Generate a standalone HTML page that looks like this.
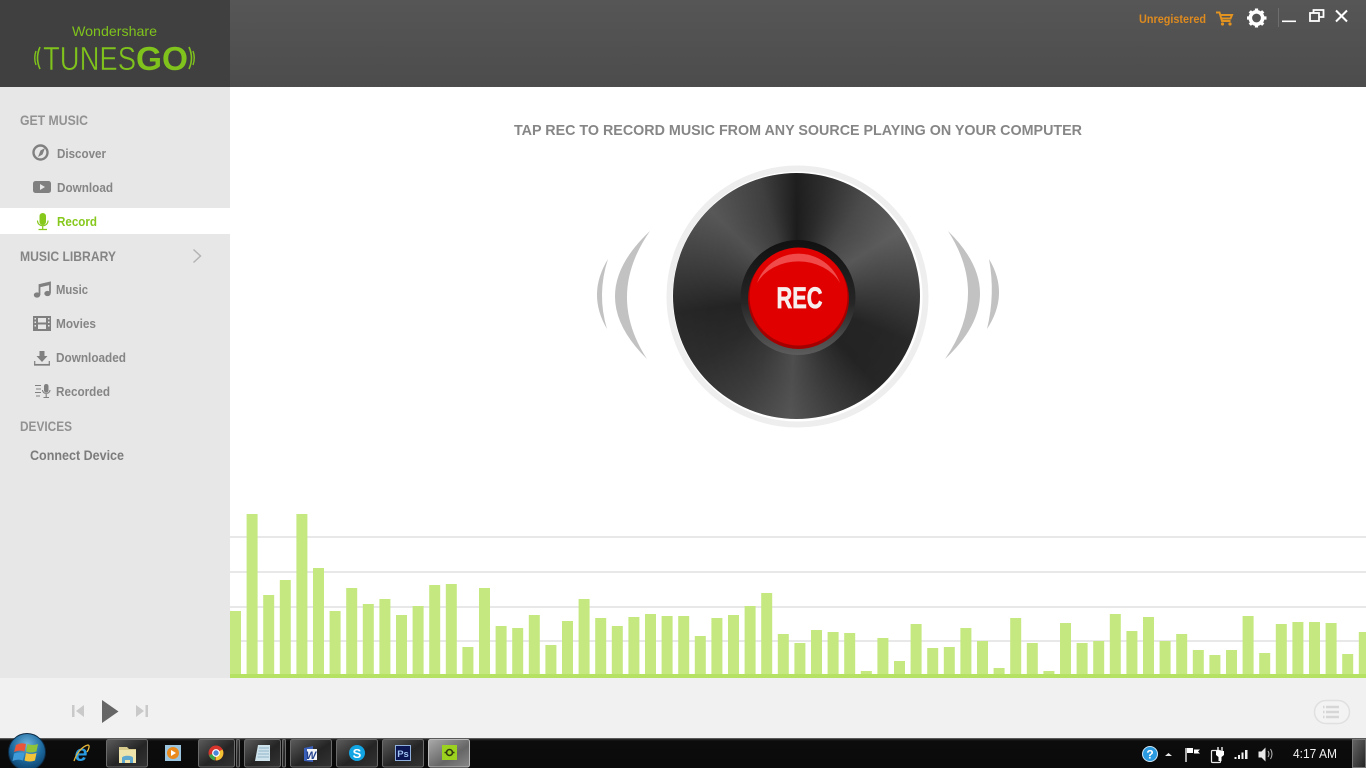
<!DOCTYPE html>
<html><head><meta charset="utf-8"><title>TunesGo</title>
<style>
html,body{margin:0;padding:0;width:1366px;height:768px;overflow:hidden;background:#fff}
svg{position:absolute;left:0;top:0;display:block}
#disc{position:absolute;left:673px;top:173px;width:247px;height:246px;border-radius:50%;
background:radial-gradient(circle,rgba(0,0,0,.22) 0%,rgba(0,0,0,.16) 50%,rgba(0,0,0,0) 100%),conic-gradient(#222 0deg,#333 14deg,#555 35deg,#6a6a6a 58deg,#4a4a4a 85deg,#2c2c2c 112deg,#2a2a2a 138deg,#444 162deg,#5e5e5e 183deg,#454545 208deg,#333 235deg,#2b2b2b 262deg,#444 285deg,#626262 315deg,#484848 342deg,#222 360deg)}
text{font-family:"Liberation Sans",sans-serif}
</style></head><body>
<svg width="1366" height="768" viewBox="0 0 1366 768" xmlns="http://www.w3.org/2000/svg">
<defs>
<linearGradient id="hd" x1="0" y1="0" x2="0" y2="1"><stop offset="0" stop-color="#565656"/><stop offset="1" stop-color="#4c4c4c"/></linearGradient>
<linearGradient id="tb" x1="0" y1="0" x2="0" y2="1"><stop offset="0" stop-color="#3c3c3c"/><stop offset=".1" stop-color="#0c0c0c"/><stop offset="1" stop-color="#0a0a0a"/></linearGradient>
<linearGradient id="btn" x1="0" y1="0" x2="1" y2="1"><stop offset="0" stop-color="#5c5c5c"/><stop offset=".55" stop-color="#242424"/><stop offset="1" stop-color="#333"/></linearGradient>
<linearGradient id="btnA" x1="0" y1="0" x2="1" y2="1"><stop offset="0" stop-color="#aaa"/><stop offset=".6" stop-color="#666"/><stop offset="1" stop-color="#888"/></linearGradient>
<radialGradient id="orb" cx=".5" cy=".3" r=".75"><stop offset="0" stop-color="#6fb3dd"/><stop offset=".55" stop-color="#1c6a9f"/><stop offset="1" stop-color="#0a3a63"/></radialGradient>
<linearGradient id="glass" x1="0" y1="0" x2="1" y2="1"><stop offset="0" stop-color="#666"/><stop offset="1" stop-color="#222"/></linearGradient>
</defs>

<!-- header -->
<rect x="230" y="0" width="1136" height="87" fill="url(#hd)"/>
<rect x="0" y="0" width="230" height="87" fill="#404040"/>
<text x="72" y="36" font-size="14" fill="#7fc31c" textLength="85" lengthAdjust="spacingAndGlyphs">Wondershare</text>
<text x="43" y="70" font-size="33" fill="#7fc31c" stroke="#404040" stroke-width=".5" paint-order="fill stroke" textLength="93" lengthAdjust="spacingAndGlyphs">TUNES</text>
<text x="136" y="70" font-size="33" font-weight="bold" fill="#7fc31c" textLength="52" lengthAdjust="spacingAndGlyphs">GO</text>
<g fill="none" stroke="#7fc31c">
<path d="M40 47Q35 58 40 69" stroke-width="1.6"/><path d="M36 51Q33.500 58 36 65" stroke-width="1.400"/>
<path d="M189 47Q194 58 189 69" stroke-width="1.600"/><path d="M193 51Q195.500 58 193 65" stroke-width="1.400"/>
</g>

<!-- top right -->
<text x="1139" y="23" font-size="12" font-weight="bold" fill="#dd8a1f" textLength="67" lengthAdjust="spacingAndGlyphs">Unregistered</text>
<g fill="none" stroke="#e29320" stroke-width="2"><path d="M1216 12.500h3.500l2.500 8.500h8.500"/><path d="M1220 15h12l-1.500 3.500h-9"/></g>
<circle cx="1222.500" cy="24" r="1.600" fill="#e29320"/><circle cx="1230" cy="24" r="1.600" fill="#e29320"/>
<circle cx="1256.500" cy="18" r="6.200" fill="none" stroke="#fff" stroke-width="3.600"/>
<g stroke="#fff" stroke-width="3.200"><path d="M1256.500 8.500v3.500M1256.500 24v3.500M1247 18h3.500M1263 18h3.500M1249.800 11.300l2.500 2.500M1260.700 22.200l2.500 2.500M1249.800 24.700l2.500-2.500M1260.700 13.800l2.500-2.500"/></g>
<rect x="1278" y="8" width="1" height="19" fill="#6e6e6e"/>
<rect x="1282" y="20.500" width="14" height="1.600" fill="#fff"/>
<g fill="none" stroke="#fff" stroke-width="1.800"><rect x="1310" y="13" width="9" height="8"/><path d="M1313.500 13v-3h10v7h-4"/></g>
<path d="M1336 10.500l11 11M1347 10.500l-11 11" stroke="#fff" stroke-width="2" fill="none"/>

<!-- sidebar -->
<rect x="0" y="87" width="230" height="591" fill="#e7e7e7"/>
<rect x="0" y="208" width="230" height="26" fill="#fff"/>
<g font-weight="bold" font-size="14" fill="#929292">
<text x="20" y="125" textLength="68" lengthAdjust="spacingAndGlyphs">GET MUSIC</text>
<text x="20" y="261" textLength="96" lengthAdjust="spacingAndGlyphs" fill="#858585">MUSIC LIBRARY</text>
<text x="20" y="431" textLength="52" lengthAdjust="spacingAndGlyphs">DEVICES</text>
</g>
<g font-weight="bold" font-size="13" fill="#858585">
<text x="57" y="158" textLength="49" lengthAdjust="spacingAndGlyphs">Discover</text>
<text x="57" y="192" textLength="56" lengthAdjust="spacingAndGlyphs">Download</text>
<text x="57" y="226" textLength="40" lengthAdjust="spacingAndGlyphs" fill="#86c81c">Record</text>
<text x="56" y="294" textLength="32" lengthAdjust="spacingAndGlyphs">Music</text>
<text x="56" y="328" textLength="40" lengthAdjust="spacingAndGlyphs">Movies</text>
<text x="56" y="362" textLength="70" lengthAdjust="spacingAndGlyphs">Downloaded</text>
<text x="56" y="396" textLength="54" lengthAdjust="spacingAndGlyphs">Recorded</text>
<text x="30" y="460" textLength="94" lengthAdjust="spacingAndGlyphs" font-size="14" fill="#7c7c7c">Connect Device</text>
</g>
<!-- sidebar icons -->
<circle cx="40.500" cy="152.500" r="7" fill="none" stroke="#808080" stroke-width="2.400"/>
<path d="M45 148l-2.500 6.500-4.500 2.500 2.500-6.500z" fill="#808080"/>
<rect x="33" y="181" width="18" height="12" rx="2.500" fill="#808080"/>
<path d="M40 184v6l5-3z" fill="#e7e7e7"/>
<rect x="39.500" y="213" width="6.500" height="12" rx="3.200" fill="#86c81c"/>
<path d="M37.500 220.500c0 7 10.500 7 10.500 0M42.700 226v3.500M38.500 229.500h8.500" fill="none" stroke="#86c81c" stroke-width="1.200"/>
<path d="M39.500 295V285l10.500-2.500V293" fill="none" stroke="#808080" stroke-width="1.800"/><path d="M39 284.500l11-2.500v3l-11 2.500z" fill="#808080"/>
<ellipse cx="37" cy="295" rx="3.200" ry="2.600" fill="#808080"/><ellipse cx="47.500" cy="293.500" rx="3.200" ry="2.600" fill="#808080"/>
<rect x="33" y="316" width="18" height="15" fill="#808080"/>
<path d="M38 318h8v4.500h-8zM38 324.500h8v4.500h-8z" fill="#e7e7e7"/>
<path d="M34.500 318h1.500v1.500h-1.500zM34.500 321.500h1.500v1.500h-1.500zM34.500 325h1.500v1.500h-1.500zM48 318h1.500v1.500h-1.500zM48 321.500h1.500v1.500h-1.500zM48 325h1.500v1.500h-1.500z" fill="#e7e7e7"/>
<path d="M39.500 351h5v5h3l-5.500 6-5.500-6h3z" fill="#808080"/>
<path d="M34 364.800h16" fill="none" stroke="#808080" stroke-width="1.700"/><path d="M34.700 361v4M49.300 361v4" stroke="#808080" stroke-width="1.200"/>
<path d="M35 385.500h6M36 389h5M35 392.500h6M36 396h4" stroke="#808080" stroke-width="1.100"/>
<rect x="44" y="384" width="4.500" height="8.500" rx="2.200" fill="#808080"/>
<path d="M42.500 390c0 4.500 7.500 4.500 7.500 0M46.200 394v3M43.500 397.500h5.500" fill="none" stroke="#808080" stroke-width="1.100"/>
<path d="M193.500 249.500l7 6.500-7 6.500" fill="none" stroke="#b4b4b4" stroke-width="1.500"/>

<!-- title -->
<text x="514" y="135" font-size="15" font-weight="bold" fill="#868686" textLength="568" lengthAdjust="spacingAndGlyphs">TAP REC TO RECORD MUSIC FROM ANY SOURCE PLAYING ON YOUR COMPUTER</text>

<!-- sound arcs -->
<g fill="#c2c2c2">
<path d="M650 231Q581.500 295 647 359Q605.500 295 650 231z"/>
<path d="M608 259Q586.500 294 607 329Q596.500 294 608 259z"/>
<path d="M948 231Q1013.500 295 945 359Q989.500 295 948 231z"/>
<path d="M989 259Q1010 294 987 329Q995.500 294 989 259z"/>
</g>
<circle cx="797.500" cy="296.500" r="128" fill="#fff" stroke="#eeeeee" stroke-width="6"/>

<!-- grid -->
<g fill="#e8e8e8"><rect x="230" y="536" width="1136" height="2"/><rect x="230" y="571" width="1136" height="2"/><rect x="230" y="606" width="1136" height="2"/><rect x="230" y="640" width="1136" height="2"/></g>
<!-- bars -->
<path fill="#c5e980" d="M230 611h11V678h-11zM246.600 514h11V678h-11zM263.200 595h11V678h-11zM279.800 580h11V678h-11zM296.400 514h11V678h-11zM313 568h11V678h-11zM329.600 611h11V678h-11zM346.200 588h11V678h-11zM362.800 604h11V678h-11zM379.400 599h11V678h-11zM396 615h11V678h-11zM412.600 606h11V678h-11zM429.200 585h11V678h-11zM445.800 584h11V678h-11zM462.400 647h11V678h-11zM479 588h11V678h-11zM495.600 626h11V678h-11zM512.200 628h11V678h-11zM528.800 615h11V678h-11zM545.400 645h11V678h-11zM562 621h11V678h-11zM578.600 599h11V678h-11zM595.200 618h11V678h-11zM611.800 626h11V678h-11zM628.400 617h11V678h-11zM645 614h11V678h-11zM661.600 616h11V678h-11zM678.200 616h11V678h-11zM694.800 636h11V678h-11zM711.400 618h11V678h-11zM728 615h11V678h-11zM744.600 606h11V678h-11zM761.200 593h11V678h-11zM777.800 634h11V678h-11zM794.400 643h11V678h-11zM811 630h11V678h-11zM827.600 632h11V678h-11zM844.200 633h11V678h-11zM860.800 671h11V678h-11zM877.400 638h11V678h-11zM894 661h11V678h-11zM910.600 624h11V678h-11zM927.200 648h11V678h-11zM943.800 647h11V678h-11zM960.400 628h11V678h-11zM977 641h11V678h-11zM993.600 668h11V678h-11zM1010.200 618h11V678h-11zM1026.800 643h11V678h-11zM1043.400 671h11V678h-11zM1060 623h11V678h-11zM1076.600 643h11V678h-11zM1093.200 641h11V678h-11zM1109.800 614h11V678h-11zM1126.400 631h11V678h-11zM1143 617h11V678h-11zM1159.600 641h11V678h-11zM1176.200 634h11V678h-11zM1192.800 650h11V678h-11zM1209.400 655h11V678h-11zM1226 650h11V678h-11zM1242.600 616h11V678h-11zM1259.200 653h11V678h-11zM1275.800 624h11V678h-11zM1292.400 622h11V678h-11zM1309 622h11V678h-11zM1325.600 623h11V678h-11zM1342.200 654h11V678h-11zM1358.800 632h7.200V678h-7.200z"/>
<rect x="230" y="674" width="1136" height="4" fill="#b6e263"/>

<!-- player -->
<rect x="0" y="678" width="1366" height="60" fill="#f1f1f1"/>
<rect x="72" y="705" width="2.500" height="12" fill="#c9c9c9"/><path d="M84 705v12l-8-6z" fill="#c9c9c9"/>
<path d="M102 700v23l16.500-11.500z" fill="#666"/>
<rect x="145.500" y="705" width="2.500" height="12" fill="#c9c9c9"/><path d="M136 705v12l8-6z" fill="#c9c9c9"/>
<rect x="1314.500" y="700.500" width="35" height="23" rx="11.500" fill="#f3f3f3" stroke="#e0e0e0" stroke-width="1.500"/>
<path d="M1326 707h13M1326 712h13M1326 717h13M1323 707h1.500M1323 712h1.500M1323 717h1.500" stroke="#d6d6d6" stroke-width="2.400"/>

<!-- taskbar -->
<rect x="0" y="738" width="1366" height="30" fill="url(#tb)"/>
<rect x="0" y="738" width="1366" height="1" fill="#5a5a5a"/>
<g stroke="#6a6a6a" stroke-width="1" fill="url(#btn)">
<rect x="106.500" y="739.500" width="41" height="27.500" rx="2"/>
<rect x="236.500" y="739.500" width="3" height="27.500" rx="1"/>
<rect x="198.500" y="739.500" width="36" height="27.500" rx="2"/>
<rect x="282.500" y="739.500" width="3" height="27.500" rx="1"/>
<rect x="244.500" y="739.500" width="36" height="27.500" rx="2"/>
<rect x="290.500" y="739.500" width="41" height="27.500" rx="2"/>
<rect x="336.500" y="739.500" width="41" height="27.500" rx="2"/>
<rect x="382.500" y="739.500" width="41" height="27.500" rx="2"/>
</g>
<rect x="428.500" y="739.500" width="41" height="27.500" rx="2" fill="url(#btnA)" stroke="#bbb"/>

<!-- start orb -->
<circle cx="27" cy="752" r="18.500" fill="url(#orb)" stroke="#0d2a44"/>
<path d="M16 745q5-3 10-1l-1.500 7.500q-5-2-10.500 .5z" fill="#e8553a"/>
<path d="M27.500 744q5 2 10.500 0l-1.500 7.500q-5.500 2-10.500 0z" fill="#8fc33a"/>
<path d="M14 753.500q5-2 10.500-.5l-1.500 7.500q-5-2-10.500 .5z" fill="#3e9ad8"/>
<path d="M26 753q5 2 10.500 0l-1.500 7.500q-5.500 2-10.500 0z" fill="#f3c33a"/>

<!-- IE -->
<text x="81" y="761" text-anchor="middle" font-size="23" font-weight="bold" font-style="italic" fill="#2a9be0">e</text>
<path d="M74 761c3-9 9-15 14-16 2 0 1 4-1 7" fill="none" stroke="#e6b83a" stroke-width="1.300"/>
<!-- folder -->
<path d="M119 747h8l2 2h7v14h-17z" fill="#d8cb8c"/>
<rect x="119" y="750" width="17" height="13" fill="#efe4ac"/>
<path d="M122 763v-5c0-3 11-3 11 0v5h-3v-3h-5v3z" fill="#5fa8cf"/>
<!-- media player -->
<rect x="165" y="745" width="16" height="16" fill="#9bc5de"/>
<circle cx="173" cy="753" r="6" fill="#ea8a1d"/><path d="M171 750v6l5-3z" fill="#fff"/>
<!-- chrome -->
<circle cx="216" cy="753" r="7.500" fill="#d9352c"/>
<path d="M216 753l-7 2a7.500 7.500 0 0 0 6 5.500z" fill="#3ba34a"/>
<path d="M216 753l6.500-3.500a7.500 7.500 0 0 1-6.500 11z" fill="#f1c232"/>
<circle cx="216" cy="753" r="3.300" fill="#4a86d8" stroke="#fff" stroke-width="1.200"/>
<!-- notepad -->
<path d="M258 745h12v16h-15z" fill="#cfe3ec"/>
<path d="M259 748h10M258.500 751h10.500M258 754h11M257.500 757h11.500" stroke="#7fa7bb" stroke-width=".8"/>
<!-- word -->
<path d="M304 748l9-2v16l-9-1z" fill="#3a5fb8"/><rect x="307" y="749" width="10" height="11" fill="#f2f4f8"/>
<text x="311" y="759" text-anchor="middle" font-size="11" font-style="italic" font-weight="bold" fill="#24418e">W</text>
<!-- skype -->
<circle cx="357" cy="753" r="8" fill="#12a5e4"/>
<text x="357" y="758" text-anchor="middle" font-size="13" font-weight="bold" fill="#fff">S</text>
<!-- PS -->
<rect x="395.500" y="745.500" width="15" height="15" fill="#0b1655" stroke="#8fb0dc"/>
<text x="403" y="757" text-anchor="middle" font-size="9.500" font-weight="bold" fill="#9fc2ee">Ps</text>
<!-- tunesgo -->
<rect x="442" y="745" width="15" height="15" fill="#9bd21f"/>
<circle cx="449.500" cy="752.500" r="3" fill="none" stroke="#2f3a10" stroke-width="1.600"/>
<path d="M444.500 752.500h1.500M453 752.500h1.500" stroke="#2f3a10" stroke-width="1.500"/>

<!-- tray -->
<circle cx="1150" cy="754" r="7.500" fill="#2a9be0" stroke="#cde6f6" stroke-width="1"/>
<text x="1150" y="758.500" text-anchor="middle" font-size="12" font-weight="bold" fill="#fff">?</text>
<path d="M1165 756l3.500-3 3.500 3z" fill="#e8e8e8"/>
<path d="M1186 748v14" stroke="#fff" stroke-width="1.300"/><path d="M1187 748h6v5h-6zM1194 749.500h6l-2 2 2 2h-6z" fill="#fff"/>
<rect x="1211.500" y="750.500" width="9" height="12" rx="1" fill="none" stroke="#e8e8e8" stroke-width="1.200"/>
<path d="M1216 751h8v4l-2.500 2v4h-3v-4l-2.500-2z" fill="#fff"/><path d="M1218 747v4M1222 747v4" stroke="#fff" stroke-width="1.300"/>
<path d="M1234.500 757h2v2h-2zM1238 755h2v4h-2zM1241.500 752.500h2V759h-2zM1245 750h2.500v9H1245z" fill="#f0f0f0"/>
<path d="M1258.500 751.500h3l4-4v14l-4-4h-3z" fill="#e8e8e8"/>
<path d="M1268 751q2 3 0 6M1270.500 749q3 5 0 10" fill="none" stroke="#bbb" stroke-width="1"/>
<text x="1293" y="758" font-size="13" fill="#f0f0f0" textLength="44" lengthAdjust="spacingAndGlyphs">4:17 AM</text>
<rect x="1352.500" y="739.500" width="13" height="28" fill="url(#glass)" stroke="#777" stroke-width="1"/>
</svg>

<div id="disc"></div>

<svg width="1366" height="768" viewBox="0 0 1366 768" xmlns="http://www.w3.org/2000/svg">
<defs>
<linearGradient id="hole" x1="0" y1="0" x2="0" y2="1"><stop offset="0" stop-color="#111"/><stop offset=".55" stop-color="#262626"/><stop offset="1" stop-color="#5c5c5c"/></linearGradient>
</defs>
<circle cx="798" cy="297.500" r="57.500" fill="url(#hole)"/>
<circle cx="798.500" cy="298.500" r="50.500" fill="#a50000"/>
<circle cx="798.500" cy="296.500" r="49" fill="#e00000"/>
<path d="M757 283a44 44 0 0 1 83 0a46 38 0 0 0-83 0z" fill="#f04a4a"/>
<text x="776.500" y="308" font-size="29.500" font-weight="bold" fill="#f7eeee" stroke="#f7eeee" stroke-width=".7" textLength="46" lengthAdjust="spacingAndGlyphs">REC</text>
</svg>
</body></html>
